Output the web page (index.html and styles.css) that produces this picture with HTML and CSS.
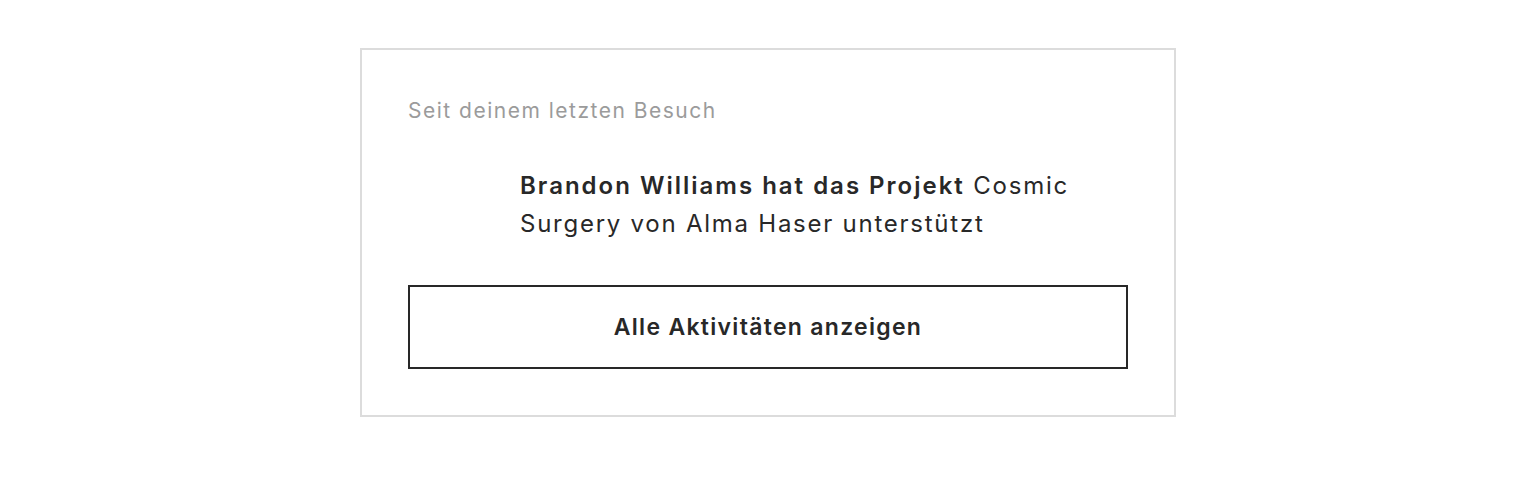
FILE: index.html
```html
<!DOCTYPE html>
<html lang="de">
<head>
<meta charset="utf-8">
<link rel="stylesheet" href="styles.css">
</head>
<body>
<div class="page">
  <section class="card">
    <h2 class="card-title">Seit deinem letzten Besuch</h2>
    <div class="activity">
      <div class="avatar"></div>
      <p class="activity-text"><strong>Brandon Williams hat das Projekt</strong> Cosmic Surgery von Alma Haser unterstützt</p>
    </div>
    <button class="btn">Alle Aktivitäten anzeigen</button>
  </section>
</div>
</body>
</html>
```
FILE: styles.css
```css
* { box-sizing: border-box; }
html, body { margin: 0; padding: 0; background: #fff; }
body { font-family: Inter, "Noto Sans", sans-serif; color: #282828; }
.page { display: flex; justify-content: center; padding-top: 48px; }
.card {
  width: 816px;
  border: 2px solid #dcdcdc;
  padding: 46px;
  display: flex;
  flex-direction: column;
}
.card-title {
  margin: 0;
  font-size: 21px;
  font-weight: 400;
  line-height: 30px;
  letter-spacing: 1.5px;
  color: #9b9b9b;
}
.activity {
  display: flex;
  gap: 32px;
  margin-top: 41px;
}
.avatar { width: 80px; flex: none; }
.activity-text {
  margin: 0;
  font-size: 24px;
  line-height: 38px;
  letter-spacing: 1.75px;
  width: 580px;
}
.activity-text strong { font-weight: 600; letter-spacing: 2px; }
.btn {
  margin-top: 42px;
  height: 84px;
  border: 2px solid #282828;
  background: #fff;
  font-family: inherit;
  font-size: 23px;
  font-weight: 600;
  letter-spacing: 1.3px;
  color: #282828;
}
```
